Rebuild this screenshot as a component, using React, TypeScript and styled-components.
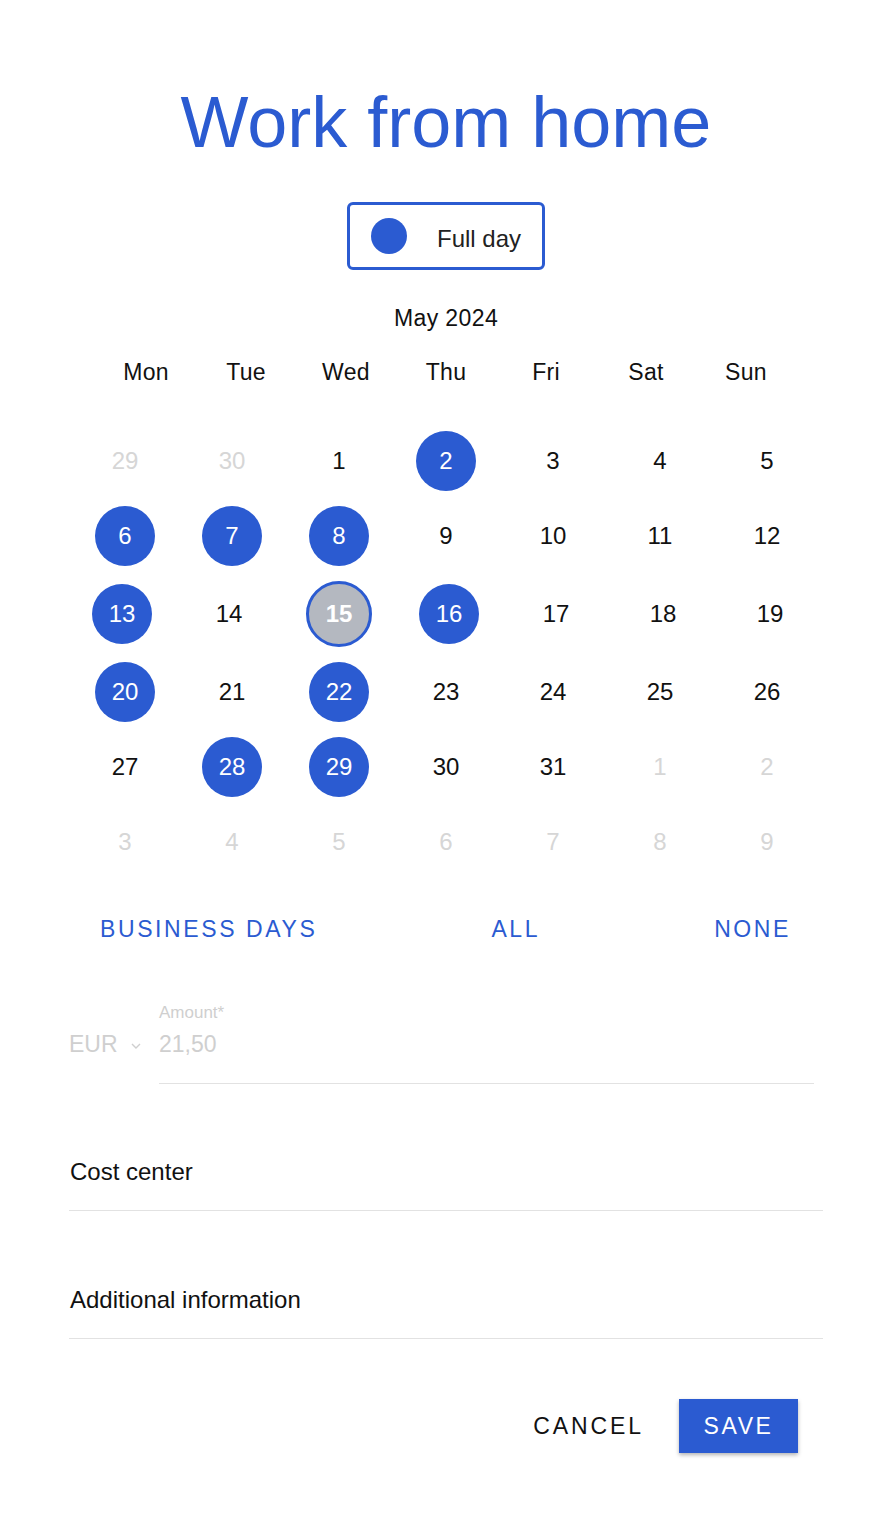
import React from "react";
import styled, { createGlobalStyle } from "styled-components";

const BLUE = "#2b5bd1";

type DayKind = "muted" | "plain" | "selected" | "today";

interface Day {
    label: number;
    kind: DayKind;
}

const selectedDays = [2, 6, 7, 8, 13, 16, 20, 22, 28, 29];

const buildWeeks = (): Array<Array<Day>> => {
    const cells: Array<Day> = [];
    cells.push({ label: 29, kind: "muted" }, { label: 30, kind: "muted" });
    for (let d = 1; d <= 31; d++) {
        let kind: DayKind = "plain";
        if (d === 15) kind = "today";
        else if (selectedDays.includes(d)) kind = "selected";
        cells.push({ label: d, kind });
    }
    for (let d = 1; d <= 9; d++) cells.push({ label: d, kind: "muted" });
    const weeks: Array<Array<Day>> = [];
    for (let i = 0; i < cells.length; i += 7) weeks.push(cells.slice(i, i + 7));
    return weeks;
};

const weekdays = ["Mon", "Tue", "Wed", "Thu", "Fri", "Sat", "Sun"];

export default function App() {
    const weeks = buildWeeks();
    return (
        <>
            <GlobalStyle />
            <Page>
                <Title>Work from home</Title>

                <ToggleBox type="button">
                    <Dot />
                    <ToggleText>Full day</ToggleText>
                </ToggleBox>

                <MonthLabel>May 2024</MonthLabel>
                <WeekdayRow>
                    {weekdays.map(w => <Weekday key={w}>{w}</Weekday>)}
                </WeekdayRow>

                <Grid>
                    {weeks.map((week, i) => (
                        <WeekRow key={i}>
                            {week.map((day, j) => (
                                <DayCell key={j} $kind={day.kind}>{day.label}</DayCell>
                            ))}
                        </WeekRow>
                    ))}
                </Grid>

                <QuickActions>
                    <LinkButton type="button">Business days</LinkButton>
                    <LinkButton type="button">All</LinkButton>
                    <LinkButton type="button">None</LinkButton>
                </QuickActions>

                <AmountRow>
                    <Currency>
                        EUR
                        <svg width="12" height="8" viewBox="0 0 12 8">
                            <polyline points="2,2 6,6 10,2" fill="none" stroke="#cfcfcf" strokeWidth="1.4" />
                        </svg>
                    </Currency>
                    <AmountField>
                        <FieldLabel>Amount*</FieldLabel>
                        <AmountValue>21,50</AmountValue>
                    </AmountField>
                </AmountRow>

                <TextField>Cost center</TextField>
                <TextField $gap={74}>Additional information</TextField>

                <Footer>
                    <TextButton type="button">Cancel</TextButton>
                    <PrimaryButton type="button">Save</PrimaryButton>
                </Footer>
            </Page>
        </>
    );
}

const GlobalStyle = createGlobalStyle`
    * { box-sizing: border-box; }
    body {
        margin: 0;
        background: #fff;
        font-family: "Liberation Sans", Arial, sans-serif;
        color: #111;
    }
`;

const Page = styled.div`
    width: 892px;
    padding: 80px 69px 60px;
    display: flex;
    flex-direction: column;
    align-items: center;
`;

const Title = styled.h1`
    margin: 0;
    font-size: 72px;
    line-height: 84px;
    font-weight: 400;
    color: ${BLUE};
    text-align: center;
`;

const ToggleBox = styled.button`
    margin-top: 38px;
    width: 198px;
    height: 68px;
    border: 3px solid ${BLUE};
    border-radius: 6px;
    background: #fff;
    display: flex;
    align-items: center;
    padding: 0 0 0 21px;
    gap: 30px;
    font-family: inherit;
    font-size: 24px;
    color: #222;
`;

const ToggleText = styled.span`
    padding-top: 6px;
`;

const Dot = styled.span`
    width: 36px;
    height: 36px;
    border-radius: 50%;
    background: ${BLUE};
    flex-shrink: 0;
`;

const MonthLabel = styled.div`
    margin-top: 34px;
    font-size: 23px;
    line-height: 28px;
    letter-spacing: 0.4px;
`;

const WeekdayRow = styled.div`
    margin-top: 26px;
    display: flex;
`;

const Weekday = styled.div`
    width: 100px;
    text-align: center;
    font-size: 23px;
    line-height: 28px;
    letter-spacing: 0.3px;
`;

const Grid = styled.div`
    margin-top: 37.5px;
    display: flex;
    flex-direction: column;
`;

const WeekRow = styled.div`
    display: flex;
    justify-content: center;
    align-items: center;
`;

const DayCell = styled.div<{ $kind: DayKind }>`
    box-sizing: content-box;
    width: 60px;
    height: 60px;
    margin: 7.5px 23.5px;
    border-radius: 50%;
    display: flex;
    align-items: center;
    justify-content: center;
    font-size: 24px;
    color: ${p => p.$kind === "muted" ? "#d6d6d6" : p.$kind === "plain" ? "#111" : "#fff"};
    background: ${p => p.$kind === "selected" ? BLUE : p.$kind === "today" ? "#b4b8c0" : "transparent"};
    border: ${p => p.$kind === "today" ? `3px solid ${BLUE}` : "none"};
    font-weight: ${p => p.$kind === "today" ? 700 : 400};
`;

const QuickActions = styled.div`
    margin-top: 25.5px;
    align-self: stretch;
    display: flex;
    justify-content: space-between;
    padding: 0 32px 0 31px;
`;

const LinkButton = styled.button`
    background: none;
    border: none;
    padding: 0;
    height: 48px;
    font-family: inherit;
    font-size: 23px;
    letter-spacing: 2.6px;
    text-transform: uppercase;
    color: ${BLUE};
`;

const AmountRow = styled.div`
    margin-top: 49px;
    align-self: stretch;
    display: flex;
    align-items: flex-start;
    padding-right: 9px;
`;

const Currency = styled.div`
    margin-top: 27px;
    width: 90px;
    display: flex;
    align-items: center;
    gap: 12px;
    font-size: 23px;
    line-height: 30px;
    color: #cfcfcf;

    svg { margin-top: 3px; }
`;

const AmountField = styled.div`
    flex: 1;
    border-bottom: 1px solid #e2e2e2;
    padding-bottom: 24px;
`;

const FieldLabel = styled.div`
    font-size: 17px;
    line-height: 22px;
    color: #cfcfcf;
`;

const AmountValue = styled.div`
    margin-top: 5px;
    font-size: 23px;
    line-height: 30px;
    color: #cfcfcf;
`;

const TextField = styled.div<{ $gap?: number }>`
    margin-top: ${p => p.$gap ?? 73}px;
    align-self: stretch;
    padding: 0 0 23px 1px;
    border-bottom: 1px solid #e2e2e2;
    font-size: 24px;
    line-height: 30px;
    color: #111;
`;

const Footer = styled.div`
    margin-top: 60px;
    align-self: stretch;
    display: flex;
    justify-content: flex-end;
    align-items: center;
    gap: 19px;
    padding-right: 25px;
`;

const TextButton = styled.button`
    background: none;
    border: none;
    padding: 0 16px;
    height: 54px;
    font-family: inherit;
    font-size: 23px;
    letter-spacing: 2.9px;
    text-transform: uppercase;
    color: #111;
`;

const PrimaryButton = styled.button`
    width: 119px;
    height: 54px;
    border: none;
    background: ${BLUE};
    color: #fff;
    font-family: inherit;
    font-size: 23px;
    letter-spacing: 2.6px;
    text-transform: uppercase;
    box-shadow: 0 2px 4px rgba(0, 0, 0, 0.3);
`;
